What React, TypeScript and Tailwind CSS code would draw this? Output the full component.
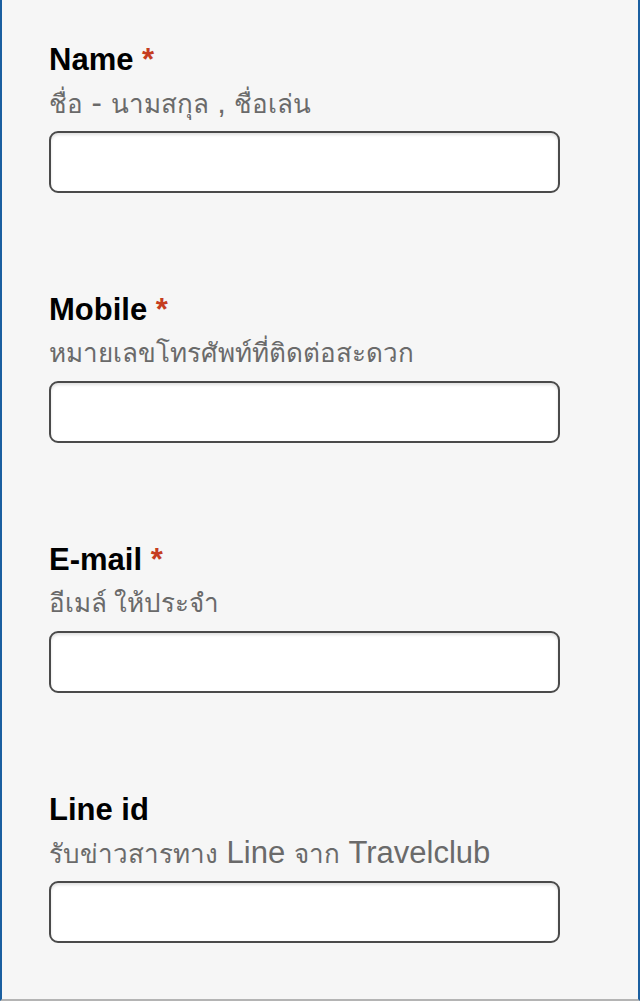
import React from "react";

type Part = { t: string; latin?: boolean };

const fields: { label: string; required: boolean; desc: Part[] }[] = [
  {
    label: "Name",
    required: true,
    desc: [
      { t: "ชื่อ" },
      { t: " - ", latin: true },
      { t: "นามสกุล" },
      { t: " , ", latin: true },
      { t: "ชื่อเล่น" },
    ],
  },
  { label: "Mobile", required: true, desc: [{ t: "หมายเลขโทรศัพท์ที่ติดต่อสะดวก" }] },
  { label: "E-mail", required: true, desc: [{ t: "อีเมล์ ให้ประจำ" }] },
  {
    label: "Line id",
    required: false,
    desc: [
      { t: "รับข่าวสารทาง" },
      { t: " Line ", latin: true },
      { t: "จาก" },
      { t: " Travelclub", latin: true },
    ],
  },
];

export default function App() {
  return (
    <div
      className="box-border h-[1001px] w-[640px] border-l-2 border-r-2 border-b-2 border-l-[#1a5fa0] border-r-[#1a5fa0] border-b-[#b4b4b4] bg-[#f6f6f6] pl-[47px] pt-[40px]"
      style={{ fontFamily: '"Liberation Sans", "Noto Sans", sans-serif' }}
    >
      <div className="flex flex-col gap-[97px]">
        {fields.map((f) => (
          <div key={f.label} className="flex flex-col">
            <div className="text-[31px] font-bold leading-[40px] text-black">
              {f.label}
              {f.required && <span className="text-[#c53d20]"> *</span>}
            </div>
            <div className="h-[36px] pt-[5px] text-[26px] leading-[36px] whitespace-nowrap text-[#6a6a6a]">
              {f.desc.map((p, i) =>
                p.latin ? (
                  <span key={i} className="text-[31px] leading-[36px] whitespace-pre">
                    {p.t}
                  </span>
                ) : (
                  <span key={i} className="leading-[36px]">
                    {p.t}
                  </span>
                )
              )}
            </div>
            <input
              type="text"
              className="mt-[15px] box-border h-[62px] w-[511px] rounded-[9px] border-2 border-[#4a4a4a] bg-white shadow-[inset_0_2px_3px_rgba(0,0,0,0.12)] outline-none"
            />
          </div>
        ))}
      </div>
    </div>
  );
}
